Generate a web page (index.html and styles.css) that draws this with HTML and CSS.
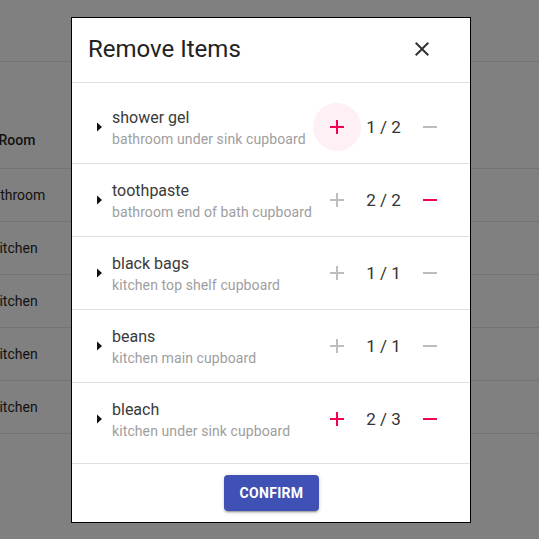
FILE: index.html
```html
<!DOCTYPE html>
<html>
<head>
<meta charset="utf-8">
<link rel="stylesheet" href="styles.css">
</head>
<body>
<div class="page">
  <div class="toolbar"></div>
  <div class="table">
    <div class="trow thead"><span class="cell head-cell">Room</span></div>
    <div class="trow"><span class="cell">bathroom</span></div>
    <div class="trow"><span class="cell">kitchen</span></div>
    <div class="trow"><span class="cell">kitchen</span></div>
    <div class="trow"><span class="cell">kitchen</span></div>
    <div class="trow"><span class="cell">kitchen</span></div>
  </div>
</div>

<div class="dialog">
  <div class="dialog-header">
    <h2 class="dialog-title">Remove Items</h2>
    <button class="icon-btn close-btn" aria-label="close">
      <svg width="24" height="24" viewBox="0 0 24 24"><path fill="#333" d="M19 6.41L17.59 5 12 10.59 6.41 5 5 6.41 10.59 12 5 17.59 6.41 19 12 13.41 17.59 19 19 17.59 13.41 12z"/></svg>
    </button>
  </div>
  <div class="dialog-content">
    <div class="item">
      <svg class="arrow" width="24" height="24" viewBox="0 0 24 24"><path fill="#111" d="M10 7.5l5 4.5-5 4.5z"/></svg>
      <div class="item-text">
        <div class="item-name">shower gel</div>
        <div class="item-loc">bathroom under sink cupboard</div>
      </div>
      <button class="icon-btn qty-btn active focused"><svg width="24" height="24" viewBox="0 0 24 24"><path d="M19 13h-6v6h-2v-6H5v-2h6V5h2v6h6v2z"/></svg></button>
      <span class="count">1 / 2</span>
      <button class="icon-btn qty-btn"><svg width="24" height="24" viewBox="0 0 24 24"><path d="M19 13H5v-2h14v2z"/></svg></button>
    </div>
    <div class="item">
      <svg class="arrow" width="24" height="24" viewBox="0 0 24 24"><path fill="#111" d="M10 7.5l5 4.5-5 4.5z"/></svg>
      <div class="item-text">
        <div class="item-name">toothpaste</div>
        <div class="item-loc">bathroom end of bath cupboard</div>
      </div>
      <button class="icon-btn qty-btn"><svg width="24" height="24" viewBox="0 0 24 24"><path d="M19 13h-6v6h-2v-6H5v-2h6V5h2v6h6v2z"/></svg></button>
      <span class="count">2 / 2</span>
      <button class="icon-btn qty-btn active"><svg width="24" height="24" viewBox="0 0 24 24"><path d="M19 13H5v-2h14v2z"/></svg></button>
    </div>
    <div class="item">
      <svg class="arrow" width="24" height="24" viewBox="0 0 24 24"><path fill="#111" d="M10 7.5l5 4.5-5 4.5z"/></svg>
      <div class="item-text">
        <div class="item-name">black bags</div>
        <div class="item-loc">kitchen top shelf cupboard</div>
      </div>
      <button class="icon-btn qty-btn"><svg width="24" height="24" viewBox="0 0 24 24"><path d="M19 13h-6v6h-2v-6H5v-2h6V5h2v6h6v2z"/></svg></button>
      <span class="count">1 / 1</span>
      <button class="icon-btn qty-btn"><svg width="24" height="24" viewBox="0 0 24 24"><path d="M19 13H5v-2h14v2z"/></svg></button>
    </div>
    <div class="item">
      <svg class="arrow" width="24" height="24" viewBox="0 0 24 24"><path fill="#111" d="M10 7.5l5 4.5-5 4.5z"/></svg>
      <div class="item-text">
        <div class="item-name">beans</div>
        <div class="item-loc">kitchen main cupboard</div>
      </div>
      <button class="icon-btn qty-btn"><svg width="24" height="24" viewBox="0 0 24 24"><path d="M19 13h-6v6h-2v-6H5v-2h6V5h2v6h6v2z"/></svg></button>
      <span class="count">1 / 1</span>
      <button class="icon-btn qty-btn"><svg width="24" height="24" viewBox="0 0 24 24"><path d="M19 13H5v-2h14v2z"/></svg></button>
    </div>
    <div class="item">
      <svg class="arrow" width="24" height="24" viewBox="0 0 24 24"><path fill="#111" d="M10 7.5l5 4.5-5 4.5z"/></svg>
      <div class="item-text">
        <div class="item-name">bleach</div>
        <div class="item-loc">kitchen under sink cupboard</div>
      </div>
      <button class="icon-btn qty-btn active"><svg width="24" height="24" viewBox="0 0 24 24"><path d="M19 13h-6v6h-2v-6H5v-2h6V5h2v6h6v2z"/></svg></button>
      <span class="count">2 / 3</span>
      <button class="icon-btn qty-btn active"><svg width="24" height="24" viewBox="0 0 24 24"><path d="M19 13H5v-2h14v2z"/></svg></button>
    </div>
  </div>
  <div class="dialog-actions">
    <button class="confirm-btn">CONFIRM</button>
  </div>
</div>
</body>
</html>
```

FILE: styles.css
```css
* { box-sizing: border-box; }

html, body {
  margin: 0;
  padding: 0;
}

body {
  width: 539px;
  height: 539px;
  overflow: hidden;
  background: #808080;
  font-family: Roboto, "Liberation Sans", sans-serif;
}

.page {
  width: 539px;
}

.toolbar {
  height: 62px;
  border-bottom: 1px solid #747474;
}

.table {
  margin-top: 50px;
}

.trow {
  height: 53px;
  border-bottom: 1px solid #737373;
  display: flex;
  align-items: center;
  font-size: 14px;
  color: #111;
}

.thead {
  height: 57px;
  font-weight: 500;
}

.cell {
  width: 80px;
  margin-left: -25px;
  text-align: center;
  flex: none;
}

.head-cell {
  margin-left: -23px;
}

/* dialog */
.dialog {
  position: fixed;
  left: 71px;
  top: 17px;
  width: 400px;
  height: 506px;
  background: #fff;
  border: 1px solid #000;
  display: flex;
  flex-direction: column;
}

.dialog-header {
  height: 65px;
  border-bottom: 1px solid #e0e0e0;
  display: flex;
  align-items: center;
  justify-content: space-between;
  padding: 0 24px 0 17px;
  flex: none;
}

.dialog-title {
  margin: 0;
  font-size: 24px;
  font-weight: 400;
  color: #222;
  line-height: 30px;
  position: relative;
  top: -1px;
  margin-left: -1px;
}

.icon-btn {
  border: 0;
  background: transparent;
  padding: 0;
  margin: 0;
  display: flex;
  align-items: center;
  justify-content: center;
  cursor: pointer;
}

.close-btn {
  width: 48px;
  height: 48px;
  border-radius: 50%;
  position: relative;
  top: -1px;
}

.dialog-content {
  padding: 8px 0;
  border-bottom: 1px solid #e0e0e0;
  flex: none;
}

.item {
  height: 73px;
  border-bottom: 1px solid #e0e0e0;
  display: flex;
  align-items: center;
  padding: 0 16px 0 15px;
}

.item:last-child {
  height: 72px;
  border-bottom: 0;
}

.arrow {
  flex: none;
  position: relative;
  top: -0.5px;
}

.item-text {
  flex: 1;
  margin-left: 1px;
  min-width: 0;
  position: relative;
  top: 1px;
}

.item-name {
  font-size: 16px;
  line-height: 20px;
  color: #3a3a3a;
}

.item-loc {
  font-size: 14px;
  line-height: 20px;
  margin-top: 1px;
  letter-spacing: 0.1px;
  color: #9e9e9e;
}

.qty-btn {
  width: 48px;
  height: 48px;
  border-radius: 50%;
  flex: none;
}

.qty-btn svg path {
  fill: #bdbdbd;
}

.qty-btn.active svg path {
  fill: #f50057;
}

.qty-btn.focused {
  background: #fef0f4;
}

.count {
  width: 45px;
  text-align: center;
  font-size: 17px;
  color: #333;
  flex: none;
}

.dialog-actions {
  flex: 1;
  display: flex;
  align-items: center;
  justify-content: center;
}

.confirm-btn {
  min-width: 64px;
  height: 36px;
  padding: 0 16px;
  border: 0;
  border-radius: 4px;
  background: #3f51b5;
  color: #fff;
  font-family: Roboto, "Liberation Sans", sans-serif;
  font-size: 14px;
  font-weight: 700;
  letter-spacing: 0.3px;
  box-shadow: 0 3px 1px -2px rgba(0,0,0,.2), 0 2px 2px 0 rgba(0,0,0,.14), 0 1px 5px 0 rgba(0,0,0,.12);
  margin-left: 1px;
}
```
